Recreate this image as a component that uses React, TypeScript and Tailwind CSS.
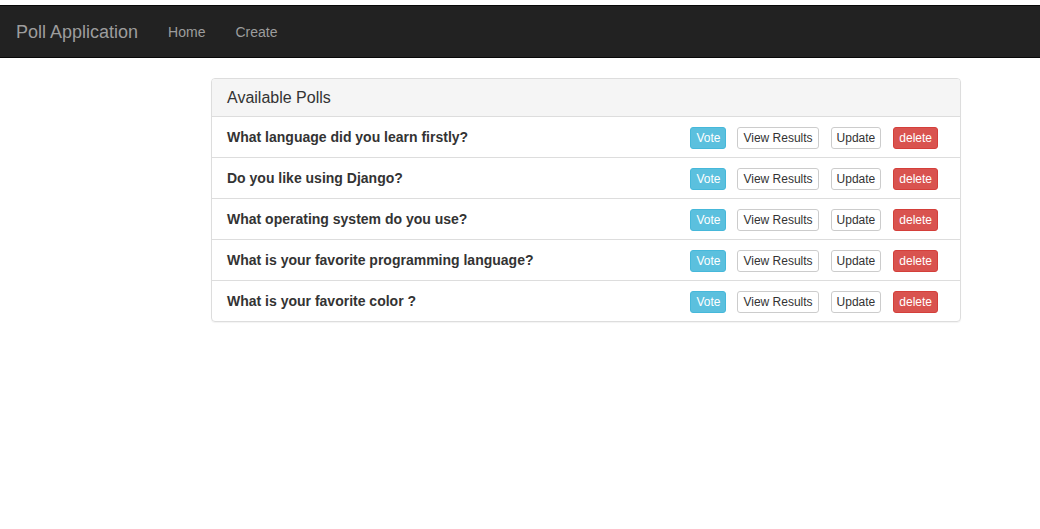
const polls = [
  "What language did you learn firstly?",
  "Do you like using Django?",
  "What operating system do you use?",
  "What is your favorite programming language?",
  "What is your favorite color ?",
];

const App: React.FC = () => {
  return (
    <div className="w-screen min-h-screen bg-white font-['Liberation_Sans',Arial,sans-serif] text-[14px] text-[#333]">
      <div className="h-[5px]" />
      <nav className="h-[53px] bg-[#222] border-y border-[#080808] flex items-center pt-[1px]">
        <div className="pl-[16px] pr-[15px] text-[18px] text-[#9d9d9d] leading-5">Poll Application</div>
        <a className="px-[15px] text-[#9d9d9d] leading-5">Home</a>
        <a className="px-[15px] text-[#9d9d9d] leading-5">Create</a>
      </nav>
      <div className="ml-[211px] mt-[20px] w-[750px] border border-[#ddd] rounded-[4px] shadow-[0_1px_1px_rgba(0,0,0,0.05)] overflow-hidden">
        <div className="h-[37px] bg-[#f5f5f5] px-[15px] flex items-center text-[16px] text-[#333]">
          Available Polls
        </div>
        {polls.map((q) => (
          <div key={q} className="h-[41px] border-t border-[#ddd] pl-[15px] pr-[22px] flex items-center">
            <strong className="font-bold text-[#333] flex-1">{q}</strong>
            <button className="mt-[2px] h-[22px] px-[5px] text-[12px] rounded-[3px] bg-[#5bc0de] border border-[#46b8da] text-white">
              Vote
            </button>
            <button className="mt-[2px] ml-[11px] h-[22px] px-[5px] text-[12px] rounded-[3px] bg-white border border-[#ccc] text-[#333]">
              View Results
            </button>
            <button className="mt-[2px] ml-[12px] h-[22px] px-[5px] text-[12px] rounded-[3px] bg-white border border-[#ccc] text-[#333]">
              Update
            </button>
            <button className="mt-[2px] ml-[12px] h-[22px] px-[5px] text-[12px] rounded-[3px] bg-[#d9534f] border border-[#d43f3a] text-white">
              delete
            </button>
          </div>
        ))}
      </div>
    </div>
  );
};

export default App;
